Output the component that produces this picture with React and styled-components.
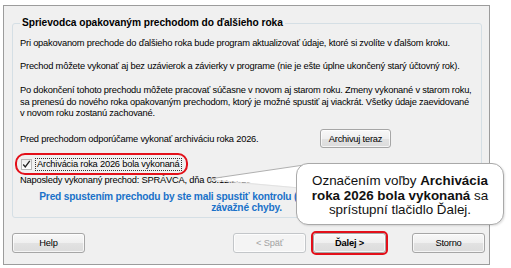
import React from "react";
import styled, { createGlobalStyle } from "styled-components";

const GlobalStyle = createGlobalStyle`
  html, body {
    margin: 0;
    padding: 0;
    background: #ffffff;
  }
  body {
    font-family: "Liberation Sans", Arial, sans-serif;
    color: #000;
  }
`;

const Page = styled.div`
  position: relative;
  width: 511px;
  height: 268px;
  padding: 5px 0 0 3px;
  box-sizing: border-box;
  overflow: hidden;
`;

const Window = styled.div`
  width: 487px;
  height: 260px;
  box-sizing: border-box;
  border: 1px solid #9c9c9c;
  background: #f0f0f0;
  padding: 11px 4px 0 8px;
  display: flex;
  flex-direction: column;
`;

const Group = styled.fieldset`
  margin: 0 3px 0 0;
  padding: 8px 8px 4.5px 7px;
  border: 1px solid #d5dfe5;
  border-radius: 3px;
  min-width: 0;
`;

const Legend = styled.legend`
  padding: 0 2px;
  font-size: 10.2px;
  font-weight: bold;
  line-height: 12px;
  letter-spacing: -0.05px;
`;

const Text = styled.p`
  margin: ${(p) => p.$top || 0}px 0 0 0;
  font-size: ${(p) => (p.$blue ? 10.2 : 9.3)}px;
  line-height: ${(p) => p.$lh || 12}px;
  letter-spacing: -0.2px;
  white-space: nowrap;
  color: ${(p) => (p.$blue ? "#1a72c9" : "#000")};
  font-weight: ${(p) => (p.$blue ? "bold" : "normal")};
  text-align: ${(p) => (p.$blue ? "center" : "left")};
`;

const ArchiveRow = styled.div`
  margin-top: 9.5px;
  display: flex;
  align-items: center;
  justify-content: space-between;
  padding-right: 82px;
  font-size: 9.3px;
  letter-spacing: -0.2px;
  white-space: nowrap;
`;

const Button = styled.button`
  box-sizing: border-box;
  width: ${(p) => p.$w || 73}px;
  height: ${(p) => p.$h || 20}px;
  padding: 0;
  border: 1px solid ${(p) => (p.disabled ? "#c3c6c9" : "#a6a6a6")};
  border-radius: 3px;
  background: ${(p) =>
    p.disabled
      ? "#f4f4f4"
      : "linear-gradient(#f8f8f8 0%, #efefef 50%, #e2e2e2 51%, #dcdcdc 100%)"};
  font-family: "Liberation Sans", Arial, sans-serif;
  font-size: 9.3px;
  letter-spacing: -0.2px;
  font-weight: ${(p) => (p.$bold ? "bold" : "normal")};
  color: ${(p) => (p.disabled ? "#a3a3a3" : "#000")};
  box-shadow: inset 0 0 0 1px rgba(255, 255, 255, 0.7);
  outline: ${(p) => (p.$marked ? "2px solid #e3101a" : "none")};
  outline-offset: 0;
  white-space: nowrap;
`;

const CheckRow = styled.div`
  margin: 7px 0 0 -3px;
  width: 169px;
  height: 18px;
  box-sizing: border-box;
  display: flex;
  align-items: center;
  gap: 3px;
  padding-left: 4px;
  border-radius: 8px;
  outline: 2px solid #e3101a;
  font-size: 9.3px;
  letter-spacing: -0.2px;
  white-space: nowrap;
`;

const Box = styled.span`
  width: 11px;
  height: 11px;
  box-sizing: border-box;
  border: 1px solid #b8b8b8;
  background: linear-gradient(#ededed, #ffffff);
  display: flex;
  align-items: center;
  justify-content: center;
`;

const FocusLabel = styled.span`
  border: 1px dotted #333;
  padding: 0 1px;
  line-height: 11px;
`;

const ButtonRow = styled.div`
  margin-top: 15px;
  display: flex;
  align-items: center;
`;

const Spacer = styled.div`
  flex: 1;
`;

const Callout = styled.div`
  position: absolute;
  left: 296px;
  top: 163px;
  width: 208px;
  height: 62px;
  box-sizing: border-box;
  background: #fff;
  border: 1px solid #a9a9a9;
  border-radius: 12px;
  font-family: "Liberation Sans", Arial, sans-serif;
  font-size: 13.4px;
  line-height: 14.5px;
  text-align: center;
  color: #111;
  padding-top: 10px;
  white-space: nowrap;
  box-shadow: 1px 1px 2px rgba(0, 0, 0, 0.12);
`;

const Tail = styled.svg`
  position: absolute;
  left: 200px;
  top: 160px;
  overflow: visible;
`;

export default function App() {
  return (
    <>
      <GlobalStyle />
      <Page>
        <Window>
          <Group>
            <Legend>Sprievodca opakovaným prechodom do ďalšieho roka</Legend>
            <Text>
              Pri opakovanom prechode do ďalšieho roka bude program aktualizovať
              údaje, ktoré si zvolíte v ďalšom kroku.
            </Text>
            <Text $top={11}>
              Prechod môžete vykonať aj bez uzávierok a závierky v programe (nie
              je ešte úplne ukončený starý účtovný rok).
            </Text>
            <Text $top={13} $lh={11.5}>
              Po dokončení tohoto prechodu môžete pracovať súčasne v novom aj
              starom roku. Zmeny vykonané v starom roku,
              <br />
              sa prenesú do nového roka opakovaným prechodom, ktorý je možné
              spustiť aj viackrát. Všetky údaje zaevidované
              <br />v novom roku zostanú zachované.
            </Text>
            <ArchiveRow>
              <span>Pred prechodom odporúčame vykonať archiváciu roka 2026.</span>
              <Button $w={71} $h={19}>
                Archivuj teraz
              </Button>
            </ArchiveRow>
            <CheckRow>
              <Box>
                <svg width="11" height="11" viewBox="0 0 11 11">
                  <path
                    d="M1.5 5.5 L4 8.5 L9.5 1"
                    fill="none"
                    stroke="#222"
                    strokeWidth="1.6"
                  />
                </svg>
              </Box>
              <FocusLabel>Archivácia roka 2026 bola vykonaná</FocusLabel>
            </CheckRow>
            <Text $top={1}>
              Naposledy vykonaný prechod: SPRÁVCA, dňa 03.12.2025 o 10:41
            </Text>
            <Text $blue $top={4.5} $lh={11}>
              Pred spustením prechodu by ste mali spustiť kontrolu
              (Nástroje/Kontrola), ktorá odhalí aj
              <br />
              závažné chyby.
            </Text>
          </Group>
          <ButtonRow>
            <Button>Help</Button>
            <Spacer />
            <Button disabled>&lt; Späť</Button>
            <Button $bold $marked style={{ marginLeft: 7 }}>
              Ďalej &gt;
            </Button>
            <Button style={{ marginLeft: 26 }}>Storno</Button>
          </ButtonRow>
        </Window>
        <Tail width="110" height="40">
          <polygon points="9,19 104,5 104,28" fill="#fff" />
          <path d="M9 19 L104 5" stroke="#b0b0b0" strokeWidth="1" fill="none" />
          <path d="M9 20 L100 28" stroke="#e2e2e2" strokeWidth="1" fill="none" />
        </Tail>
        <Callout>
          Označením voľby <b>Archivácia</b>
          <br />
          <b>roka 2026 bola vykonaná</b> sa
          <br />
          sprístupní tlačidlo Ďalej.
        </Callout>
      </Page>
    </>
  );
}
